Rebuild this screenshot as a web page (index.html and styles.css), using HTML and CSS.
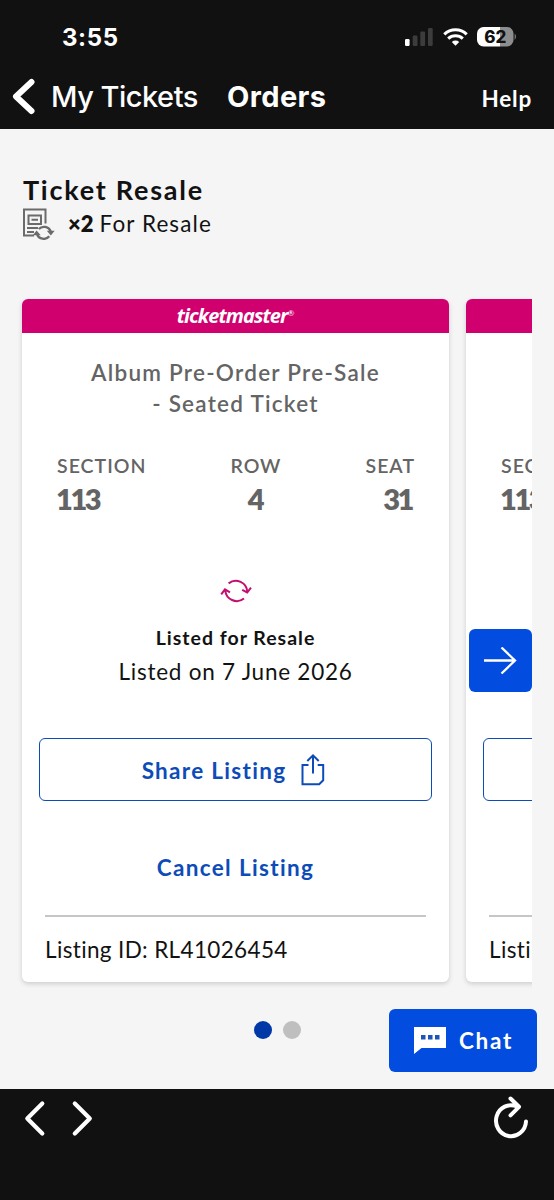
FILE: index.html
```html
<!DOCTYPE html>
<html lang="en">
<head>
<meta charset="utf-8">
<title>Orders</title>
<link rel="stylesheet" href="styles.css">
</head>
<body>
<div class="phone">
  <header class="top">
    <div class="status">
      <span class="time">3:55</span>
      <svg class="status-icons" width="116" height="24" viewBox="0 0 116 24">
        <rect x="1" y="15" width="4.6" height="7" rx="1.2" fill="#fff"/>
        <g fill="#3c3c3c"><rect x="8.7" y="11.5" width="4.8" height="10.5" rx="1.2"/><rect x="16.3" y="7.5" width="4.8" height="14.5" rx="1.2"/><rect x="24" y="4" width="4.7" height="18" rx="1.2"/></g>
        <g fill="none" stroke="#fff" stroke-width="3.1"><path d="M40.3 10.3a16.2 16.2 0 0 1 22.4 0"/><path d="M44.2 14.6a10.7 10.7 0 0 1 14.6 0"/></g>
        <path d="M51.5 21.8l-3.7-3.9a5.4 5.4 0 0 1 7.4 0z" fill="#fff"/>
        <path d="M79.5 3H96v19.500H79.500a6.500 6.500 0 0 1-6.500-6.500V9.500A6.500 6.500 0 0 1 79.500 3z" fill="#fff"/>
        <path d="M96 3h7a6.500 6.500 0 0 1 6.500 6.500V16a6.500 6.500 0 0 1-6.500 6.500h-7z" fill="#8d8d8d"/>
        <path d="M110.600 9.500q3 3.200 0 6.500z" fill="#777"/>
        <text class="battery" x="91.400" y="18.900" text-anchor="middle">62</text>
      </svg>
    </div>
    <nav class="nav">
      <svg class="back" width="24" height="38" viewBox="0 0 24 38"><path d="M20.500 5L5 19.500l15.500 14.500" fill="none" stroke="#fff" stroke-width="6" stroke-linecap="round" stroke-linejoin="round"/></svg>
      <span class="nav-back">My Tickets</span>
      <span class="nav-title">Orders</span>
      <span class="help">Help</span>
    </nav>
  </header>

  <main class="content">
    <h1 class="title">Ticket Resale</h1>
    <div class="summary">
      <svg width="32" height="32" viewBox="0 0 32 32" fill="none" stroke="#6b6b6b" stroke-width="2">
        <path d="M22.500 15.500V1.500H1v26h10"/><path d="M5.500 7.500h12.500v8.500H5.500z"/><path d="M8.500 11.700h6.500M4 20h11M4 24h7"/>
        <path d="M15.800 21a7.200 7.200 0 0 1 11.900 2.500M14 26a7.200 7.200 0 0 0 12.300 2.300" stroke-width="2.300"/>
        <path d="M23.800 22.800h7.900l-3.900 4.700zM9.800 27.300h7.900l-4.100-4.900z" fill="#6b6b6b" stroke="none"/>
      </svg>
      <span class="count">×2</span><span class="for">For Resale</span>
    </div>

    <section class="carousel">
      <article class="card">
        <div class="brand"><span class="logo">ticketmaster</span><span class="reg">®</span></div>
        <p class="type">Album Pre-Order Pre-Sale<br>- Seated Ticket</p>
        <div class="seats">
          <div class="seat"><span class="label">SECTION</span><span class="num">113</span></div>
          <div class="seat mid"><span class="label">ROW</span><span class="num">4</span></div>
          <div class="seat end"><span class="label">SEAT</span><span class="num">31</span></div>
        </div>
        <svg class="cycle" width="32" height="26" viewBox="0 0 32 26" fill="none" stroke="#c3106f" stroke-width="2">
          <path d="M8.600 5.400A11.500 11.500 0 0 1 27.300 14M22.200 11.900l5 2.600 3.800-4.800M24 20.500A11.500 11.500 0 0 1 5.300 12M1.200 16.400L5 11.400l5 2.900"/>
        </svg>
        <p class="listed">Listed for Resale</p>
        <p class="date">Listed on 7 June 2026</p>
        <div class="share"><span>Share Listing</span>
          <svg width="24" height="33" viewBox="0 0 24 33" fill="none" stroke="currentColor" stroke-width="2"><path d="M7.500 12H1.500v19.300h16.700l4-4V12h-5.500M12 20.500V2.500M6.300 8L12 2.300 17.700 8"/></svg>
        </div>
        <div class="cancel">Cancel Listing</div>
        <footer class="listing">Listing ID: RL41026454</footer>
      </article>
      <article class="card">
        <div class="brand"></div>
        <p class="type"></p>
        <div class="seats">
          <div class="seat"><span class="label">SECTION</span><span class="num">113</span></div>
        </div>
        <div class="cycle"></div>
        <p class="listed"></p>
        <p class="date"></p>
        <div class="share"></div>
        <div class="cancel"></div>
        <footer class="listing">Listing</footer>
      </article>
      <div class="next"><svg width="33" height="28" viewBox="0 0 33 28" fill="none" stroke="#fff" stroke-width="2.300"><path d="M0 13.500h31M17.500.5L31 13.500 17.500 26.500"/></svg></div>
    </section>
    <div class="dots"><i class="dot on"></i><i class="dot"></i></div>
    <div class="chat">
      <svg width="32" height="27" viewBox="0 0 32 27"><path d="M0 0h32v21H7.500L0 27z" fill="#fff"/><path d="M7 8h4.500v4.500H7zM14 8h4.500v4.500H14zM21 8h4.500v4.500H21z" fill="#1c56b8"/></svg>
      <span>Chat</span>
    </div>
  </main>

  <footer class="toolbar">
    <svg width="70" height="42" viewBox="0 0 70 42" fill="none" stroke="#fff" stroke-width="4.200" stroke-linecap="round" stroke-linejoin="round"><path d="M19.300 7.500L4.300 22.500l15 15M51.800 7.500l15 15-15 15"/></svg>
    <svg width="36" height="44" viewBox="0 0 36 44" fill="none" stroke="#fff" stroke-width="4" stroke-linecap="round" stroke-linejoin="round"><path d="M33 25.500A15 15.500 0 1 1 24 10.500M17.500 2.500l8.500 8.300-8.500 8.500"/></svg>
  </footer>
</div>
</body>
</html>
```
FILE: styles.css
```css
* { box-sizing: border-box; }
body { margin: 0; background: #111; }
h1, p { margin: 0; }
svg { display: block; flex: none; }
.phone {
  width: 554px;
  height: 1200px;
  display: flex;
  flex-direction: column;
  overflow: hidden;
  background: #111;
  color: #121212;
  font-family: Lato, "Liberation Sans", sans-serif;
  font-size: 22.5px;
  font-variant-ligatures: none;
  white-space: nowrap;
}
.top { height: 129px; color: #fff; padding-top: 24px; }
.status { height: 26px; display: flex; justify-content: space-between; padding: 0 34px 0 62px; }
.time { font: 700 24px/27px Inter, sans-serif; letter-spacing: .6px; }
.battery { font: 800 17px Inter, sans-serif; fill: #111; }
.nav { display: flex; align-items: center; height: 38px; margin-top: 27px; padding: 0 22px 0 11px; }
.nav-back { font: 500 29px/38px Inter, sans-serif; letter-spacing: -.5px; width: 176px; margin: 1px 0 0 16px; }
.nav-title { font: 700 29px/38px Inter, sans-serif; letter-spacing: .4px; margin-top: 1px; }
.help { font-weight: 700; line-height: 38px; letter-spacing: .8px; margin: 6px 0 0 auto; }

.content { position: relative; height: 960px; background: #f5f5f5; padding: 42px 22px 0; }
.title { font-size: 27px; line-height: 37px; height: 36px; font-weight: 700; letter-spacing: 1.75px; margin-left: 1px; }
.summary { display: flex; align-items: center; height: 34px; margin-left: 1px; }
.count { font-weight: 800; font-size: 22px; margin: -1px 0 0 13px; }
.for { margin: -1px 0 0 6px; letter-spacing: 1.1px; }

.carousel { position: relative; width: 518px; height: 698px; margin: 50px 0 0 -8px; padding: 8px 0 0 8px; display: flex; gap: 17px; overflow: hidden; }
.card { flex: none; width: 427px; height: 683px; background: #fff; border-radius: 6px; box-shadow: 0 2px 5px rgba(0, 0, 0, .16); }
.brand { height: 34px; background: #d0006f; border-radius: 6px 6px 0 0; color: #fff; display: flex; justify-content: center; }
.logo { font: italic 700 20px/33px "Open Sans", sans-serif; letter-spacing: -.9px; }
.reg { font-size: 8px; line-height: 29px; }
.type { height: 63px; margin-top: 24px; text-align: center; line-height: 31px; font-weight: 600; letter-spacing: 1.25px; color: #646464; }
.seats { display: flex; justify-content: space-between; height: 72px; margin-top: 33px; padding: 0 35px; color: #646464; }
.seat { display: flex; flex-direction: column; align-items: flex-start; }
.mid { align-items: center; }
.end { align-items: flex-end; }
.label { font-size: 19.5px; line-height: 26px; font-weight: 600; letter-spacing: 1px; margin-right: -1px; }
.num { font-size: 29px; line-height: 40px; font-weight: 800; letter-spacing: -2.4px; margin-left: -1px; }
.mid .num { margin-left: -1px; }
.end .num { margin-right: 2px; }
.cycle { height: 26px; margin: 53px auto 0; }
.listed { height: 30px; line-height: 30px; margin-top: 19px; font-size: 19.5px; font-weight: 700; letter-spacing: 1px; text-align: center; }
.date { height: 34px; line-height: 34px; margin-top: 2px; letter-spacing: .75px; text-align: center; }
.share { height: 63px; margin: 49px 17px 0; padding-right: 4px; border: 1.5px solid #0d4cb8; border-radius: 6px; color: #0d4cb8; font-weight: 700; letter-spacing: 1.3px; display: flex; align-items: center; justify-content: center; gap: 15px; }
.share span { padding-top: 1px; }
.cancel { height: 40px; line-height: 41px; margin-top: 46px; color: #0d4cb8; font-weight: 700; letter-spacing: 1.35px; text-align: center; }
.listing { margin: 28px 23px 0; border-top: 2px solid #c6c6c6; line-height: 65px; letter-spacing: .35px; }
.next { position: absolute; left: 455px; top: 338px; width: 63px; height: 63px; border-radius: 6px; background: #024ddf; display: flex; align-items: center; justify-content: center; }
.dots { display: flex; gap: 11px; margin: 32px 0 0 232px; }
.dot { width: 18px; height: 18px; border-radius: 50%; background: #bfbfbf; }
.dot.on { background: #0038a8; }
.chat { position: absolute; left: 389px; top: 880px; width: 148px; height: 63px; border-radius: 6px; background: #024ddf; color: #fff; display: flex; align-items: center; padding-left: 25px; gap: 13px; font-weight: 700; letter-spacing: 1.7px; }

.toolbar { display: flex; justify-content: space-between; height: 111px; padding: 7px 25px 0 23px; }
```
